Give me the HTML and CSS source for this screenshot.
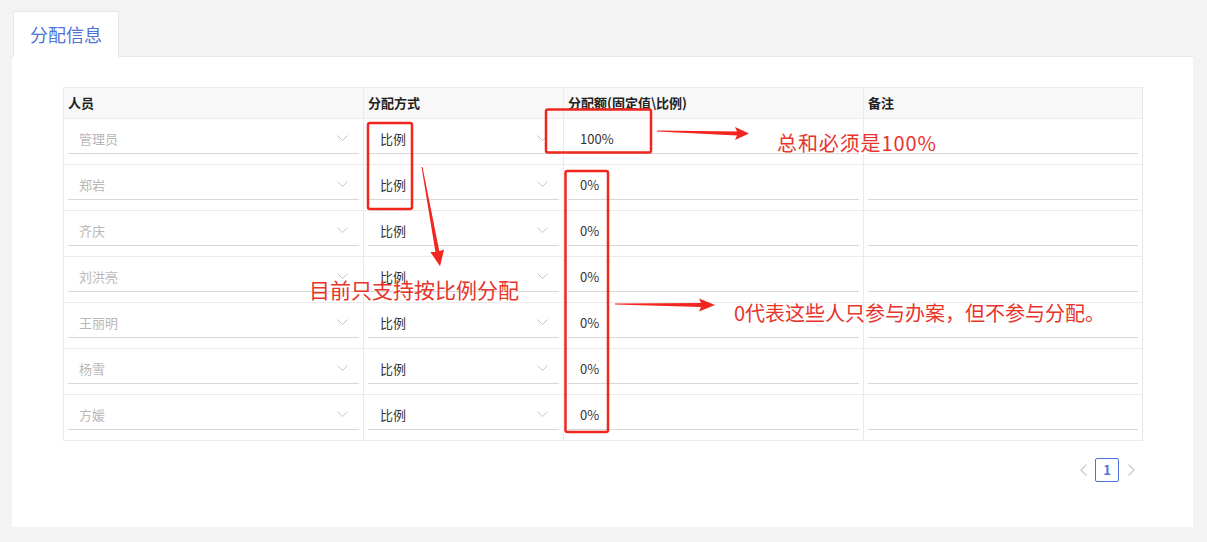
FILE: index.html
```html
<!DOCTYPE html>
<html lang="zh">
<head>
<meta charset="utf-8">
<title>分配信息</title>
<link rel="stylesheet" href="styles.css">
</head>
<body>
<div class="page">
  <div class="tabs">
    <div class="tab">分配信息</div>
  </div>
  <div class="panel">
    <div class="grid">
      <div class="th">人员</div>
      <div class="th">分配方式</div>
      <div class="th">分配额(固定值\比例)</div>
      <div class="th last">备注</div>

      <div class="td"><div class="field muted"><span>管理员</span><svg class="chev" viewBox="0 0 11 6"><polyline points="0.5,0.5 5.5,5.5 10.5,0.5"/></svg></div></div>
      <div class="td"><div class="field"><span>比例</span><svg class="chev" viewBox="0 0 11 6"><polyline points="0.5,0.5 5.5,5.5 10.5,0.5"/></svg></div></div>
      <div class="td"><div class="field"><span>100%</span></div></div>
      <div class="td last"><div class="field"></div></div>

      <div class="td"><div class="field muted"><span>郑岩</span><svg class="chev" viewBox="0 0 11 6"><polyline points="0.5,0.5 5.5,5.5 10.5,0.5"/></svg></div></div>
      <div class="td"><div class="field"><span>比例</span><svg class="chev" viewBox="0 0 11 6"><polyline points="0.5,0.5 5.5,5.5 10.5,0.5"/></svg></div></div>
      <div class="td"><div class="field"><span>0%</span></div></div>
      <div class="td last"><div class="field"></div></div>

      <div class="td"><div class="field muted"><span>齐庆</span><svg class="chev" viewBox="0 0 11 6"><polyline points="0.5,0.5 5.5,5.5 10.5,0.5"/></svg></div></div>
      <div class="td"><div class="field"><span>比例</span><svg class="chev" viewBox="0 0 11 6"><polyline points="0.5,0.5 5.5,5.5 10.5,0.5"/></svg></div></div>
      <div class="td"><div class="field"><span>0%</span></div></div>
      <div class="td last"><div class="field"></div></div>

      <div class="td"><div class="field muted"><span>刘洪亮</span><svg class="chev" viewBox="0 0 11 6"><polyline points="0.5,0.5 5.5,5.5 10.5,0.5"/></svg></div></div>
      <div class="td"><div class="field"><span>比例</span><svg class="chev" viewBox="0 0 11 6"><polyline points="0.5,0.5 5.5,5.5 10.5,0.5"/></svg></div></div>
      <div class="td"><div class="field"><span>0%</span></div></div>
      <div class="td last"><div class="field"></div></div>

      <div class="td"><div class="field muted"><span>王丽明</span><svg class="chev" viewBox="0 0 11 6"><polyline points="0.5,0.5 5.5,5.5 10.5,0.5"/></svg></div></div>
      <div class="td"><div class="field"><span>比例</span><svg class="chev" viewBox="0 0 11 6"><polyline points="0.5,0.5 5.5,5.5 10.5,0.5"/></svg></div></div>
      <div class="td"><div class="field"><span>0%</span></div></div>
      <div class="td last"><div class="field"></div></div>

      <div class="td"><div class="field muted"><span>杨雪</span><svg class="chev" viewBox="0 0 11 6"><polyline points="0.5,0.5 5.5,5.5 10.5,0.5"/></svg></div></div>
      <div class="td"><div class="field"><span>比例</span><svg class="chev" viewBox="0 0 11 6"><polyline points="0.5,0.5 5.5,5.5 10.5,0.5"/></svg></div></div>
      <div class="td"><div class="field"><span>0%</span></div></div>
      <div class="td last"><div class="field"></div></div>

      <div class="td"><div class="field muted"><span>方媛</span><svg class="chev" viewBox="0 0 11 6"><polyline points="0.5,0.5 5.5,5.5 10.5,0.5"/></svg></div></div>
      <div class="td"><div class="field"><span>比例</span><svg class="chev" viewBox="0 0 11 6"><polyline points="0.5,0.5 5.5,5.5 10.5,0.5"/></svg></div></div>
      <div class="td"><div class="field"><span>0%</span></div></div>
      <div class="td last"><div class="field"></div></div>
    </div>

    <div class="pager">
      <div class="pbtn"><svg viewBox="0 0 7 12"><polyline points="6.5,0.5 0.8,6 6.5,11.5"/></svg></div>
      <div class="pnum">1</div>
      <div class="pbtn"><svg viewBox="0 0 7 12"><polyline points="0.5,0.5 6.2,6 0.5,11.5"/></svg></div>
    </div>
  </div>
</div>

<svg class="marks" width="1207" height="542" viewBox="0 0 1207 542">
  <g fill="none" stroke="#f0261f" stroke-width="2.5">
    <rect x="368" y="123" width="44" height="86" rx="2"/>
    <rect x="546" y="109.5" width="105" height="43" rx="2"/>
    <rect x="565.5" y="171" width="42.5" height="261" rx="2"/>
  </g>
  <g fill="#f0261f">
    <polygon points="657,130.6 737,131.4 735,127 749,133.5 735,140 737,135.4 657,131.6"/>
    <polygon points="615,303.6 701,303 699,298.5 715,305 699,311.5 701,307 615,304.6"/>
    <g transform="translate(422,167) rotate(79.7)">
      <polygon points="0,-0.5 86,-2 85,-7 101,0 85,7 86,2 0,0.5"/>
    </g>
  </g>
</svg>
<div class="note n1">总和必须是100%</div>
<div class="note n2">目前只支持按比例分配</div>
<div class="note n3">0代表这些人只参与办案，但不参与分配。</div>
</body>
</html>
```

FILE: styles.css
```css
html, body {
  margin: 0;
  padding: 0;
}
body {
  background: #f3f3f3;
  font-family: "Noto Sans CJK SC", "Noto Sans", sans-serif;
  color: #333;
  width: 1207px;
  height: 542px;
  overflow: hidden;
  position: relative;
}
.page {
  padding: 11px 14px 15px 12px;
}
.tabs {
  display: flex;
  border-bottom: 1px solid #e6e6e6;
}
.tab {
  margin-left: 1px;
  margin-bottom: -1px;
  width: 104px;
  height: 44px;
  border: 1px solid #e6e6e6;
  border-bottom-color: #fff;
  background: #fff;
  color: #4f72d8;
  font-size: 18px;
  line-height: 44px;
  text-align: center;
}
.panel {
  background: #fff;
  height: 440px;
  padding: 30px 50px 0 51px;
}
.grid {
  display: grid;
  grid-template-columns: 300px 200px 300px 279px;
  border-left: 1px solid #ebebeb;
  border-top: 1px solid #ebebeb;
  width: 1079px;
}
.th {
  height: 30px;
  background: #f8f8f9;
  border-right: 1px solid #ebebeb;
  border-bottom: 1px solid #ebebeb;
  padding-left: 4px;
  font-size: 13px;
  font-weight: bold;
  color: #222;
  line-height: 30px;
}
.td {
  border-right: 1px solid #ebebeb;
  border-bottom: 1px solid #ebebeb;
  padding: 3px 4px 0 4px;
  box-sizing: border-box;
  height: 46px;
}
.th.last, .td.last {
  border-right-color: #e6e6e6;
}
.field {
  height: 31px;
  border-bottom: 1px solid #d8d8d8;
  display: flex;
  align-items: center;
  justify-content: space-between;
  padding: 1px 11px 0 12px;
  box-sizing: border-box;
  height: 32px;
  font-size: 13px;
  color: #333;
}
.field.muted {
  color: #b8b8b8;
  padding-left: 11px;
}
.chev {
  width: 11px;
  height: 6px;
  fill: none;
  stroke: #c0c4cc;
  stroke-width: 1;
}
.pager {
  display: flex;
  justify-content: flex-end;
  margin-top: 17px;
}
.pbtn {
  width: 24px;
  height: 24px;
  display: flex;
  align-items: center;
  justify-content: center;
}
.pbtn svg {
  width: 7px;
  height: 12px;
  fill: none;
  stroke: #c8c8c8;
  stroke-width: 1.2;
}
.pnum {
  width: 22px;
  height: 22px;
  border: 1px solid #4f72d8;
  border-radius: 2px;
  color: #4f72d8;
  font-size: 13px;
  font-weight: bold;
  line-height: 22px;
  text-align: center;
}
.marks {
  position: absolute;
  left: 0;
  top: 0;
  pointer-events: none;
}
.note {
  position: absolute;
  color: #e8342b;
  font-size: 20px;
  line-height: 24px;
  white-space: nowrap;
}
.n1 {
  left: 777px;
  top: 131px;
  letter-spacing: 0.9px;
}
.n2 {
  left: 309px;
  top: 277px;
  font-size: 21px;
}
.n3 {
  left: 734px;
  top: 301px;
}
```
